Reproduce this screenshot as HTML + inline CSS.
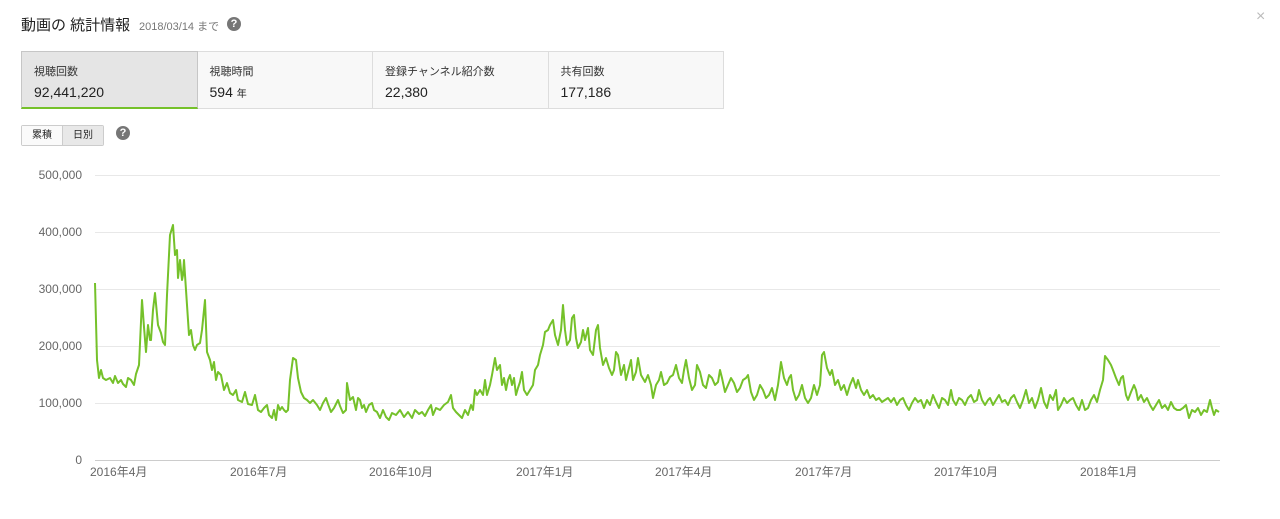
<!DOCTYPE html>
<html><head><meta charset="utf-8"><style>
body{margin:0;width:1280px;height:519px;background:#fff;font-family:"Liberation Sans","Noto Sans CJK JP",sans-serif;position:relative;overflow:hidden;color:#222}
.abs{position:absolute}
.title{left:21px;top:14px;font-size:15px;color:#222}
.date{left:139px;top:18px;font-size:11px;color:#777}
.q{width:14px;height:14px;border-radius:50%;background:#767676;color:#fff;font-size:11px;font-weight:bold;text-align:center;line-height:14px}
.tabs{left:21px;top:51px;width:703px;height:58px;display:flex}
.tab{width:175px;height:56px;border:1px solid #ddd;border-left:none;background:#f8f8f8;position:relative}
.tab:first-child{border:1px solid #c6c6c6;background:#e5e5e5;border-bottom:2px solid #75c12a;height:55px}
.tab .l{position:absolute;left:12px;top:11px;font-size:11px;color:#333}
.tab .v{position:absolute;left:12px;top:32px;font-size:14px;color:#222}
.tab .v small{font-size:10px}
.btns{left:21px;top:125px;height:19px;display:flex;border:1px solid #ccc;border-radius:2px;font-size:10px}
.btns div{padding:0 10px;line-height:19px;background:#fafafa}
.btns div+div{background:#e8e8e8;border-left:1px solid #ccc}
.yl{font-size:12px;color:#666;text-align:right;width:62px;left:20px}
.xl{font-size:12px;color:#666;top:463px}
</style></head><body>
<div class="abs title">動画の 統計情報</div>
<div class="abs date">2018/03/14 まで</div>
<div class="abs q" style="left:227px;top:17px">?</div>
<div class="abs" style="left:1256px;top:8px;font-size:16px;color:#bbb">×</div>
<div class="abs tabs">
<div class="tab"><div class="l">視聴回数</div><div class="v">92,441,220</div></div>
<div class="tab"><div class="l">視聴時間</div><div class="v">594 <small>年</small></div></div>
<div class="tab"><div class="l">登録チャンネル紹介数</div><div class="v">22,380</div></div>
<div class="tab"><div class="l">共有回数</div><div class="v">177,186</div></div>
</div>
<div class="abs btns"><div>累積</div><div>日別</div></div>
<div class="abs q" style="left:116px;top:126px">?</div>
<div class="abs yl" style="top:168px">500,000</div>
<div class="abs yl" style="top:225px">400,000</div>
<div class="abs yl" style="top:282px">300,000</div>
<div class="abs yl" style="top:339px">200,000</div>
<div class="abs yl" style="top:396px">100,000</div>
<div class="abs yl" style="top:453px">0</div>
<div class="abs xl" style="left:90px">2016年4月</div>
<div class="abs xl" style="left:230px">2016年7月</div>
<div class="abs xl" style="left:369px">2016年10月</div>
<div class="abs xl" style="left:516px">2017年1月</div>
<div class="abs xl" style="left:655px">2017年4月</div>
<div class="abs xl" style="left:795px">2017年7月</div>
<div class="abs xl" style="left:934px">2017年10月</div>
<div class="abs xl" style="left:1080px">2018年1月</div>
<svg class="abs" style="left:0;top:0" width="1280" height="519">
<g stroke="#e8e8e8" stroke-width="1">
<line x1="95" x2="1220" y1="175.5" y2="175.5"/><line x1="95" x2="1220" y1="232.5" y2="232.5"/><line x1="95" x2="1220" y1="289.5" y2="289.5"/><line x1="95" x2="1220" y1="346.5" y2="346.5"/><line x1="95" x2="1220" y1="403.5" y2="403.5"/>
</g>
<line x1="95" x2="1220" y1="460.5" y2="460.5" stroke="#ccc"/>
<polyline fill="none" stroke="#75c12a" stroke-width="2" stroke-linejoin="round" points="95,283 97,360 99,378 101,370 103,378 106,380 110,378 113,383 115,376 118,383 121,380 123,384 126,387 128,378 131,380 134,385 136,374 139,365 142,300 144,327 146,352 148,325 150,340 151,340 153,310 155,293 158,325 161,333 163,342 165,345 167,295 170,235 173,225 175,255 177,250 178,278 180,260 182,280 183,275 184,260 186,290 189,335 191,330 193,345 195,350 197,345 200,343 202,330 205,300 207,352 210,360 212,370 214,362 216,380 218,372 221,375 224,390 227,383 230,393 233,395 236,390 238,400 242,402 245,392 248,404 252,405 255,395 258,410 261,412 264,408 267,405 269,415 272,418 274,410 276,420 278,405 280,410 282,407 284,410 286,412 288,410 290,380 293,358 296,360 298,378 301,392 304,398 307,400 310,403 313,400 317,405 320,410 323,403 326,398 328,404 331,412 334,408 338,400 340,406 343,413 346,410 347,383 350,400 353,397 356,410 358,398 360,400 362,408 364,405 366,412 369,405 372,403 374,410 377,412 380,418 383,410 386,417 389,420 392,413 396,415 400,410 404,417 408,412 412,418 415,410 419,414 422,412 425,416 428,410 431,405 433,415 436,408 440,410 444,405 448,402 451,395 453,408 456,412 459,415 462,418 465,410 468,415 471,405 473,410 475,390 477,395 480,390 483,395 485,380 487,395 490,385 492,375 495,358 497,370 500,365 502,385 504,378 506,390 508,380 510,375 512,385 514,378 516,395 518,388 520,382 522,372 524,390 527,395 530,390 533,385 535,370 538,365 540,355 543,345 545,332 548,330 550,325 553,320 555,335 558,345 561,330 563,305 565,330 567,345 570,340 572,318 574,315 576,338 578,348 581,342 583,330 585,340 588,328 590,350 593,355 596,330 598,325 600,348 603,365 606,358 609,368 612,375 614,370 616,352 618,355 621,375 624,365 626,380 629,368 631,360 633,380 636,372 638,358 641,375 645,382 648,375 651,385 653,398 656,385 659,380 661,372 664,385 667,383 670,377 673,375 676,365 679,378 682,383 684,370 686,360 689,378 692,390 695,385 697,365 700,372 703,385 706,388 709,375 712,378 715,385 718,382 720,370 722,378 725,392 728,385 731,378 734,383 737,392 740,388 743,380 746,378 748,375 751,392 754,400 757,395 760,385 763,390 766,398 769,395 772,388 775,400 778,385 781,362 784,378 787,385 789,378 791,375 793,390 796,400 799,395 802,385 805,398 808,403 811,398 814,385 817,395 820,385 822,355 824,352 827,368 830,375 832,370 835,385 838,380 841,390 844,385 847,395 850,385 853,378 856,388 858,380 861,390 864,395 867,390 870,398 873,395 876,400 879,398 882,402 885,400 888,398 891,402 894,398 897,405 900,400 903,398 906,405 909,410 912,403 915,398 918,402 921,400 924,408 927,400 930,405 933,395 936,402 939,408 942,398 945,400 948,405 951,390 953,400 956,405 959,398 962,400 965,405 968,398 971,395 974,402 977,400 979,390 982,400 985,405 988,400 990,398 993,405 996,400 999,395 1002,402 1005,400 1008,405 1011,398 1014,395 1017,402 1020,408 1023,400 1026,390 1029,403 1032,398 1035,408 1038,400 1041,388 1044,402 1047,408 1050,395 1053,400 1056,390 1058,410 1061,405 1064,398 1067,403 1070,400 1073,398 1076,405 1079,410 1082,400 1085,410 1088,408 1091,400 1094,395 1097,402 1100,390 1103,380 1105,356 1108,360 1111,365 1113,370 1116,378 1119,385 1121,378 1123,376 1126,395 1128,400 1131,392 1134,385 1136,390 1138,400 1141,395 1144,402 1147,398 1150,405 1153,410 1156,405 1159,400 1162,408 1165,405 1168,410 1171,402 1174,408 1177,410 1180,410 1183,408 1186,405 1189,418 1192,410 1195,412 1198,408 1201,415 1204,410 1207,412 1210,400 1212,408 1214,415 1216,410 1219,412"/>
</svg>
</body></html>
